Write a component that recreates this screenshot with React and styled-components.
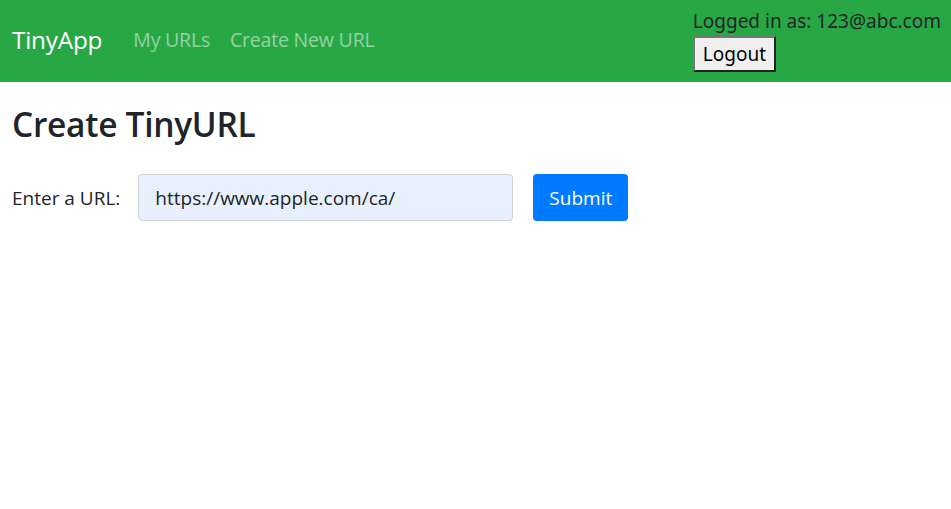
import styled, { createGlobalStyle } from 'styled-components';

const GlobalStyle = createGlobalStyle`
	body {
		margin: 0;
		font-family: "Open Sans", "Noto Sans", sans-serif;
		color: #212529;
		background: #fff;
	}
`;

const Navbar = styled.nav`
	display: flex;
	align-items: center;
	justify-content: space-between;
	height: 82px;
	padding: 0 10px 0 12px;
	box-sizing: border-box;
	background: #28a745;
`;

const NavLeft = styled.div`
	display: flex;
	align-items: center;
	padding-bottom: 4px;
`;

const Brand = styled.a`
	font-size: 24.3px;
	color: #fff;
	margin-right: 31px;
	letter-spacing: -0.2px;
`;

const NavLink = styled.a`
	font-size: 19.5px;
	color: rgba(255, 255, 255, 0.5);
	margin-right: 20px;
	letter-spacing: -0.2px;
`;

const UserBox = styled.div`
	display: flex;
	flex-direction: column;
	align-items: flex-start;
	align-self: flex-start;
	padding-top: 8px;
`;

const UserText = styled.span`
	font-family: "Noto Sans", sans-serif;
	font-size: 19px;
	line-height: 27px;
	color: #212529;
`;

const LogoutButton = styled.button`
	font-family: "Noto Sans", sans-serif;
	font-size: 19px;
	height: 36px;
	padding: 0 8px;
	margin-top: 1px;
	color: #000;
	background: #efefef;
	border: 2px solid;
	border-color: #767676 #222 #222 #767676;
`;

const Main = styled.main`
	padding: 0 12px;
`;

const Title = styled.h1`
	font-size: 33.5px;
	font-weight: 600;
	margin: 19px 0 27px;
	letter-spacing: -0.3px;
`;

const Form = styled.form`
	display: flex;
	align-items: center;
`;

const Label = styled.label`
	font-size: 19px;
	margin-right: 18px;
`;

const UrlInput = styled.input`
	width: 375px;
	height: 47px;
	box-sizing: border-box;
	padding: 0 16px;
	font-family: "Open Sans", sans-serif;
	font-size: 19px;
	color: #212529;
	background: #e8f0fe;
	border: 1px solid #ced4da;
	border-radius: 4px;
	margin-right: 20px;
`;

const SubmitButton = styled.button`
	height: 47px;
	padding: 0 16px;
	font-family: "Open Sans", sans-serif;
	font-size: 19px;
	color: #fff;
	background: #007bff;
	border: none;
	border-radius: 4px;
`;

export default function App() {
	return (
		<>
			<GlobalStyle />
			<Navbar>
				<NavLeft>
					<Brand>TinyApp</Brand>
					<NavLink>My URLs</NavLink>
					<NavLink>Create New URL</NavLink>
				</NavLeft>
				<UserBox>
					<UserText>Logged in as: 123@abc.com</UserText>
					<LogoutButton>Logout</LogoutButton>
				</UserBox>
			</Navbar>
			<Main>
				<Title>Create TinyURL</Title>
				<Form onSubmit={(e) => e.preventDefault()}>
					<Label>Enter a URL:</Label>
					<UrlInput defaultValue="https://www.apple.com/ca/" />
					<SubmitButton type="submit">Submit</SubmitButton>
				</Form>
			</Main>
		</>
	);
}
